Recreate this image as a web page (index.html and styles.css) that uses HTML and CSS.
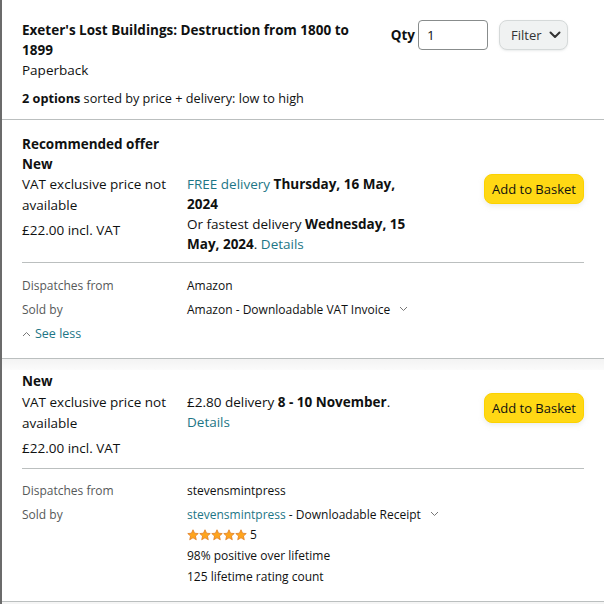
FILE: index.html
```html
<!DOCTYPE html>
<html>
<head>
<meta charset="utf-8">
<link rel="stylesheet" href="styles.css">
</head>
<body>
<div class="page">
  <div class="header">
    <div class="header-top">
      <div class="title-block">
        <div class="title">Exeter's Lost Buildings: Destruction from 1800 to 1899</div>
        <div class="format">Paperback</div>
      </div>
      <div class="controls">
        <span class="qty-label">Qty</span>
        <div class="qty-input">1</div>
        <div class="filter-btn">Filter
          <svg class="filter-chev" width="12" height="8" viewBox="0 0 12 8"><path d="M1.5 1.5 L6 6 L10.5 1.5" fill="none" stroke="#333" stroke-width="2" stroke-linecap="round" stroke-linejoin="round"/></svg>
        </div>
      </div>
    </div>
    <div class="sort-line"><b>2 options</b> sorted by price + delivery: low to high</div>
  </div>

  <div class="offer first">
    <div class="offer-heading">Recommended offer</div>
    <div class="cond">New</div>
    <div class="offer-row">
      <div class="price-col">
        <div class="vat">VAT exclusive price not available</div>
        <div class="price">£22.00 incl. VAT</div>
      </div>
      <div class="delivery-col">
        <div><span class="link">FREE delivery</span> <b>Thursday, 16 May,</b></div>
        <div><b>2024</b></div>
        <div>Or fastest delivery <b>Wednesday, 15</b></div>
        <div><b>May, 2024</b>. <span class="link">Details</span></div>
      </div>
      <div class="btn-col">
        <div class="basket-btn">Add to Basket</div>
      </div>
    </div>
    <div class="divider"></div>
    <div class="details">
      <div class="drow"><div class="dlabel">Dispatches from</div><div class="dval">Amazon</div></div>
      <div class="drow"><div class="dlabel">Sold by</div><div class="dval">Amazon - Downloadable VAT Invoice <svg class="small-chev" width="9" height="6" viewBox="0 0 9 6"><path d="M1 1 L4.5 4.5 L8 1" fill="none" stroke="#777" stroke-width="1"/></svg></div></div>
      <div class="see-less"><svg class="up-chev" width="9" height="6" viewBox="0 0 9 6"><path d="M1 5 L4.5 1.5 L8 5" fill="none" stroke="#777" stroke-width="1"/></svg><span class="link">See less</span></div>
    </div>
  </div>

  <div class="gap"></div>

  <div class="offer second">
    <div class="cond">New</div>
    <div class="offer-row">
      <div class="price-col">
        <div class="vat">VAT exclusive price not available</div>
        <div class="price">£22.00 incl. VAT</div>
      </div>
      <div class="delivery-col">
        <div>£2.80 delivery <b>8 - 10 November</b>.</div>
        <div><span class="link">Details</span></div>
      </div>
      <div class="btn-col">
        <div class="basket-btn">Add to Basket</div>
      </div>
    </div>
    <div class="divider"></div>
    <div class="details">
      <div class="drow"><div class="dlabel">Dispatches from</div><div class="dval">stevensmintpress</div></div>
      <div class="drow seller"><div class="dlabel">Sold by</div>
        <div class="dval">
          <div><span class="link">stevensmintpress</span> - Downloadable Receipt <svg class="small-chev" width="9" height="6" viewBox="0 0 9 6"><path d="M1 1 L4.5 4.5 L8 1" fill="none" stroke="#777" stroke-width="1"/></svg></div>
          <div class="stars-line">
            <span class="stars">
              <svg width="12" height="12" viewBox="0 0 24 24"><path d="M12 1.5l3.1 6.9 7.4.7-5.6 5 1.7 7.4L12 17.6l-6.6 3.9 1.7-7.4-5.6-5 7.4-.7z" fill="#ffa41c" stroke="#de7921" stroke-width="1.5"/></svg><svg width="12" height="12" viewBox="0 0 24 24"><path d="M12 1.5l3.1 6.9 7.4.7-5.6 5 1.7 7.4L12 17.6l-6.6 3.9 1.7-7.4-5.6-5 7.4-.7z" fill="#ffa41c" stroke="#de7921" stroke-width="1.5"/></svg><svg width="12" height="12" viewBox="0 0 24 24"><path d="M12 1.5l3.1 6.9 7.4.7-5.6 5 1.7 7.4L12 17.6l-6.6 3.9 1.7-7.4-5.6-5 7.4-.7z" fill="#ffa41c" stroke="#de7921" stroke-width="1.5"/></svg><svg width="12" height="12" viewBox="0 0 24 24"><path d="M12 1.5l3.1 6.9 7.4.7-5.6 5 1.7 7.4L12 17.6l-6.6 3.9 1.7-7.4-5.6-5 7.4-.7z" fill="#ffa41c" stroke="#de7921" stroke-width="1.5"/></svg><svg width="12" height="12" viewBox="0 0 24 24"><path d="M12 1.5l3.1 6.9 7.4.7-5.6 5 1.7 7.4L12 17.6l-6.6 3.9 1.7-7.4-5.6-5 7.4-.7z" fill="#ffa41c" stroke="#de7921" stroke-width="1.5"/></svg>
            </span>
            <span>5</span>
          </div>
          <div class="dline">98% positive over lifetime</div>
          <div class="dline">125 lifetime rating count</div>
        </div>
      </div>
    </div>
  </div>
  <div class="bottom"></div>
</div>
</body>
</html>
```
FILE: styles.css
```css
* { box-sizing: border-box; }
html, body { margin: 0; padding: 0; background: #fff; }
body {
  font-family: "Open Sans", "Noto Sans", sans-serif;
  color: #0f1111;
  font-size: 13.5px;
  line-height: 20px;
}
.page {
  width: 604px;
  height: 604px;
  border-left: 2px solid #6b6b6b;
  overflow: hidden;
}
.header {
  padding: 20px 20px 0 20px;
  border-bottom: 1px solid #bbbfbf;
  height: 120px;
}
.header-top { display: flex; justify-content: space-between; }
.title-block { width: 340px; }
.title { font-weight: 700; }
.controls { display: flex; align-items: flex-start; padding-right: 16px; }
.qty-label { font-weight: 700; line-height: 30px; margin-right: 3px; }
.qty-input {
  width: 70px; height: 30px;
  border: 1px solid #888c8c;
  border-radius: 4px;
  padding-left: 8px;
  line-height: 28px;
  margin-right: 11px;
}
.filter-btn {
  width: 69px; height: 30px;
  background: #f0f2f2;
  border: 1px solid #d5d9d9;
  border-radius: 8px;
  display: flex; align-items: center;
  padding-left: 11px;
  font-size: 13px;
  color: #333;
  box-shadow: 0 1px 2px rgba(213,217,217,.5);
}
.filter-chev { margin-left: 7px; }
.sort-line { font-size: 12.7px; margin-top: 8px; }

.offer { padding: 0 20px; }
.first { padding-top: 14px; height: 239px; border-bottom: 1px solid #bbbfbf; }
.offer-heading { font-weight: 700; }
.cond { font-weight: 700; }
.offer-row { display: flex; }
.price-col { width: 165px; }
.vat { line-height: 21px; }
.price { margin-top: 4px; }
.delivery-col { width: 228px; white-space: nowrap; }
.btn-col { flex: 1; display: flex; justify-content: flex-end; }
.basket-btn {
  width: 100px; height: 30px;
  background: #ffd814;
  border: 1px solid #fcd200;
  border-radius: 8px;
  font-size: 13px;
  text-align: center;
  line-height: 28px;
  box-shadow: 0 2px 5px rgba(213,217,217,.5);
}
.link { color: #1d7686; }
.divider { height: 1px; background: #bbbfbf; }
.first .divider { margin-top: 8px; }
.details { font-size: 12px; line-height: 18px; color: #0f1111; }
.first .details { padding-top: 14px; }
.drow { display: flex; margin-bottom: 6px; }
.dlabel { width: 165px; color: #565959; }
.small-chev { margin-left: 6px; vertical-align: 2px; }
.see-less { font-size: 12.5px; display: flex; align-items: center; }
.up-chev { margin-right: 4px; }

.gap { height: 11px; background: linear-gradient(#f3f3f3, #fbfbfb); }
.second { padding-top: 1px; height: 231px; }
.second .offer-row { margin-top: 1px; }
.second .basket-btn { margin-top: 1px; }
.second .divider { margin-top: 10px; }
.second .details { padding-top: 13px; }
.stars-line { display: flex; align-items: center; margin-top: 2px; }
.stars { display: inline-flex; margin-right: 3px; }
.stars svg { display: block; }
.dline { margin-top: 3px; }
.bottom { border-top: 1px solid #bbbfbf; height: 20px; background: #f5f5f5; }
```
